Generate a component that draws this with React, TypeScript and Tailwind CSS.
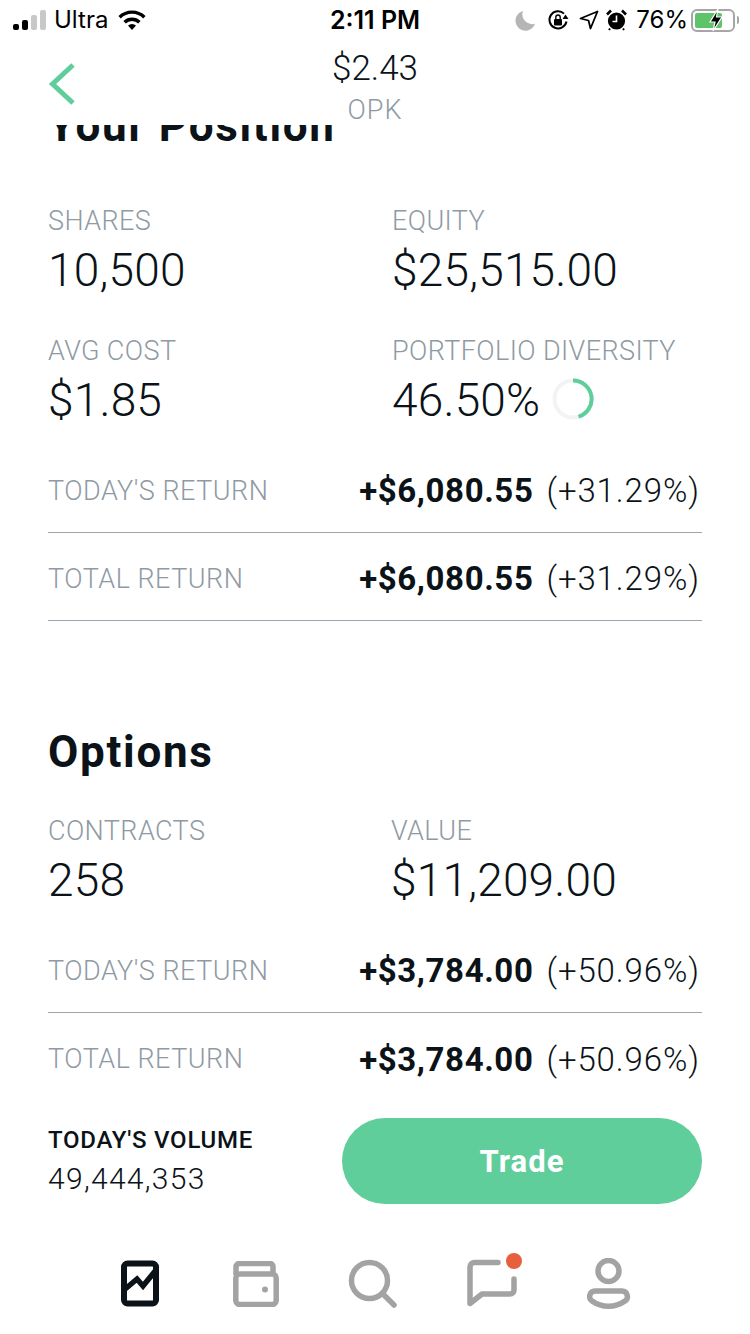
import { ReactNode } from "react";

const din = "font-['Roboto','Liberation_Sans',sans-serif]";
const sf = "font-['Inter','Liberation_Sans',sans-serif]";

const Stat = ({ label, value, extra }: { label: string; value: string; extra?: ReactNode }) => (
  <div className="flex flex-col">
    <div className="h-[30px] text-[27px] leading-[30px] font-light text-[#8f9aa4] tracking-[0.4px] whitespace-nowrap">{label}</div>
    <div className="flex items-center h-[50px] mt-[9px] text-[46px] leading-[50px] font-light text-[#0b1318] tracking-[0.2px] whitespace-nowrap">
      {value}
      {extra}
    </div>
  </div>
);

const ReturnRow = ({ label, amount, pct, border = true }: { label: string; amount: string; pct: string; border?: boolean }) => (
  <div className={`flex items-center justify-between h-[88px] pt-[5px] ${border ? "border-b border-[#9aa5ae]" : ""}`}>
    <span className="text-[27px] font-light text-[#8f9aa4] tracking-[0.5px]">{label}</span>
    <span className="text-[33px] text-[#0b1318] mr-[2px] whitespace-nowrap">
      <span className="font-bold tracking-[0.6px]">{amount}</span>
      <span className="font-light tracking-[0.9px] ml-[13px]">{pct}</span>
    </span>
  </div>
);

const Ring = () => (
  <svg width="42" height="42" viewBox="0 0 42 42" className="ml-[12px] mt-[-2px]">
    <circle cx="21" cy="21" r="18.5" fill="none" stroke="#f1f3f6" strokeWidth="4" />
    <path d="M21 2.500A18.500 18.500 0 0 1 26.500 38.700" fill="none" stroke="#5fce9b" strokeWidth="4" />
  </svg>
);

const StatusBar = () => (
  <div className={`${sf} relative flex items-center h-[40px] shrink-0 text-[#000]`}>
    <div className="flex items-end gap-[3px] ml-[13px] h-[22px] pb-[1px]">
      <div className="w-[6px] h-[6px] rounded-[2px] bg-black" />
      <div className="w-[6px] h-[10px] rounded-[2px] bg-black" />
      <div className="w-[6px] h-[15px] rounded-[2px] bg-[#c8c8c8]" />
      <div className="w-[6px] h-[20px] rounded-[2px] bg-[#c8c8c8]" />
    </div>
    <span className="ml-[8px] text-[24px] leading-[40px]">Ultra</span>
    <svg width="30" height="22" viewBox="0 0 30 22" className="ml-[9px]">
      <path d="M15 21 11 16.600a6 6 0 0 1 8 0Z" fill="#000" />
      <path d="M7.600 13.200a10.600 10.600 0 0 1 14.800 0" fill="none" stroke="#000" strokeWidth="3.400" />
      <path d="M2.600 8.200a17.800 17.800 0 0 1 24.800 0" fill="none" stroke="#000" strokeWidth="3.400" />
    </svg>
    <span className="absolute left-0 right-0 text-center text-[25px] font-semibold leading-[40px]">2:11 PM</span>
    <div className="ml-auto flex items-center mr-[11px]">
      <svg width="21" height="21" viewBox="0 0 21 21">
        <path d="M8 1a9.800 9.800 0 0 0 12 12.800A10 10 0 1 1 8 1Z" fill="#b5b5b5" />
      </svg>
      <svg width="22" height="22" viewBox="0 0 22 22" className="ml-[11px]">
        <path d="M19.500 12.500A8.600 8.600 0 1 1 17 4.600" fill="none" stroke="#000" strokeWidth="2" />
        <path d="M21.500 10h-6l3-4.500Z" fill="#000" />
        <rect x="7" y="10" width="8" height="6.500" rx="1" fill="#000" />
        <path d="M8.800 10V8.200a2.200 2.200 0 0 1 4.400 0V10" fill="none" stroke="#000" strokeWidth="1.400" />
      </svg>
      <svg width="20" height="20" viewBox="0 0 20 20" className="ml-[10px]">
        <path d="M18.500 1.500 11.500 18.500 9.500 10.500 1.500 8.500Z" fill="none" stroke="#000" strokeWidth="1.800" strokeLinejoin="round" />
      </svg>
      <svg width="21" height="22" viewBox="0 0 21 22" className="ml-[7px]">
        <circle cx="10.500" cy="12" r="8.600" fill="#000" />
        <path d="M1 5.500 5 1.500M20 5.500 16 1.500" stroke="#000" strokeWidth="2.600" />
        <path d="M10.500 6.500V12.500H6.500" fill="none" stroke="#fff" strokeWidth="1.600" />
        <path d="M4 19.500 3 21M17 19.500 18 21" stroke="#000" strokeWidth="2" />
      </svg>
      <span className="ml-[9px] text-[24px] leading-[40px]">76%</span>
      <div className="relative ml-[3px] w-[44px] h-[23px] rounded-[6px] border-2 border-[#a6a6a6] p-[2px]">
        <div className="w-[27px] h-full bg-[#5ec46a] rounded-[2px]" />
        <svg width="16" height="24" viewBox="0 0 16 24" className="absolute left-[15px] top-[-2.500px]">
          <path d="M10 1 2 14h5l-2 9 9-14H8.500Z" fill="#000" stroke="#fff" strokeWidth="1.200" />
        </svg>
      </div>
      <div className="ml-[2px] w-[2px] h-[8px] rounded-r-[2px] bg-[#a6a6a6]" />
    </div>
  </div>
);

const Header = () => (
  <div className={`${din} relative flex flex-col items-center h-[85px] shrink-0 bg-white z-10`}>
    <svg width="30" height="44" viewBox="0 0 30 44" className="absolute left-[47px] top-[22px]">
      <path d="M26 3 5.500 22 26 41" fill="none" stroke="#5fce9b" strokeWidth="5" />
    </svg>
    <div className="h-[48px] text-[35px] leading-[58px] font-light text-[#0b1318]">$2.43</div>
    <div className="h-[36px] text-[27px] leading-[44px] font-light text-[#8f9aa4] tracking-[1px]">OPK</div>
  </div>
);

const TabBar = () => (
  <div className="flex items-center h-[115px] shrink-0 pl-[120px] pt-[14px] bg-white">
    <svg width="40" height="47" viewBox="0 0 40 47">
      <rect x="4" y="3.500" width="32" height="40" rx="3.500" fill="none" stroke="#0b1318" strokeWidth="6" />
      <path d="M4 30 17 19 23 26 36 10" fill="none" stroke="#0b1318" strokeWidth="5.500" />
    </svg>
    <svg width="46" height="46" viewBox="0 0 46 46" className="ml-[73px]">
      <path d="M3 14V6a3.500 3.500 0 0 1 3.500-3.500H37a3 3 0 0 1 3 3V13" fill="none" stroke="#a3a3a3" strokeWidth="5.500" />
      <rect x="2.800" y="13" width="40.400" height="30.500" rx="4" fill="none" stroke="#a3a3a3" strokeWidth="5.500" />
      <circle cx="32" cy="28.500" r="3" fill="#a3a3a3" />
    </svg>
    <svg width="50" height="50" viewBox="0 0 50 50" className="ml-[69px]">
      <circle cx="21.500" cy="21.500" r="18" fill="none" stroke="#a3a3a3" strokeWidth="5.500" />
      <path d="M34.500 34.500 46 46" fill="none" stroke="#a3a3a3" strokeWidth="5.500" strokeLinecap="round" />
    </svg>
    <div className="relative w-[52px] h-[50px] ml-[69px]">
      <svg width="52" height="50" viewBox="0 0 52 50">
        <path d="M31 3.500H7.500A4.500 4.500 0 0 0 3 8V44.500L15 35H43a4 4 0 0 0 4-4V20" fill="none" stroke="#a3a3a3" strokeWidth="5.500" strokeLinecap="round" strokeLinejoin="round" />
      </svg>
      <div className="absolute left-[39px] top-[-6px] w-[16px] h-[16px] rounded-full bg-[#e85f3b]" />
    </div>
    <svg width="44" height="52" viewBox="0 0 44 52" className="ml-[68px]">
      <circle cx="21.500" cy="13" r="10.500" fill="none" stroke="#a3a3a3" strokeWidth="5.500" />
      <path d="M8 33H35A5.500 5.500 0 0 1 38 43 C28 50 15 50 5 43 A5.500 5.500 0 0 1 8 33Z" fill="none" stroke="#a3a3a3" strokeWidth="5.500" />
    </svg>
  </div>
);

export default function App() {
  return (
    <div className={`${din} w-[750px] h-[1334px] flex flex-col overflow-hidden bg-white`}>
      <StatusBar />
      <Header />
      <div className="flex-1 min-h-0 overflow-hidden px-[48px]">
        <h2 className="mt-[-23px] h-[48px] text-[44px] leading-[48px] font-bold text-[#0b1318] tracking-[1.7px] whitespace-nowrap">Your Position</h2>
        <div className="grid grid-cols-[344px_1fr] gap-y-[41px] mt-[56px]">
          <Stat label="SHARES" value="10,500" />
          <Stat label="EQUITY" value="$25,515.00" />
          <Stat label="AVG COST" value="$1.85" />
          <Stat label="PORTFOLIO DIVERSITY" value="46.50%" extra={<Ring />} />
        </div>
        <div className="mt-[20px]">
          <ReturnRow label="TODAY'S RETURN" amount="+$6,080.55" pct="(+31.29%)" />
          <ReturnRow label="TOTAL RETURN" amount="+$6,080.55" pct="(+31.29%)" />
        </div>
        <h2 className="mt-[107px] h-[48px] text-[44px] leading-[48px] font-bold text-[#0b1318] tracking-[1.7px]">Options</h2>
        <div className="grid grid-cols-[343px_1fr] mt-[40px]">
          <Stat label="CONTRACTS" value="258" />
          <Stat label="VALUE" value="$11,209.00" />
        </div>
        <div className="mt-[20px]">
          <ReturnRow label="TODAY'S RETURN" amount="+$3,784.00" pct="(+50.96%)" />
          <ReturnRow label="TOTAL RETURN" amount="+$3,784.00" pct="(+50.96%)" border={false} />
        </div>
      </div>
      <div className="flex items-center justify-between h-[116px] shrink-0 px-[48px] bg-white">
        <div className="flex flex-col">
          <span className="text-[24px] leading-[30px] font-medium text-[#0b1318] tracking-[0.75px]">TODAY'S VOLUME</span>
          <span className="text-[30px] leading-[36px] mt-[6px] font-light text-[#0b1318] tracking-[1.3px]">49,444,353</span>
        </div>
        <button className="w-[360px] h-[86px] pt-[3px] rounded-full bg-[#60ce9b] text-white text-[31px] font-bold tracking-[1px]">Trade</button>
      </div>
      <TabBar />
    </div>
  );
}
